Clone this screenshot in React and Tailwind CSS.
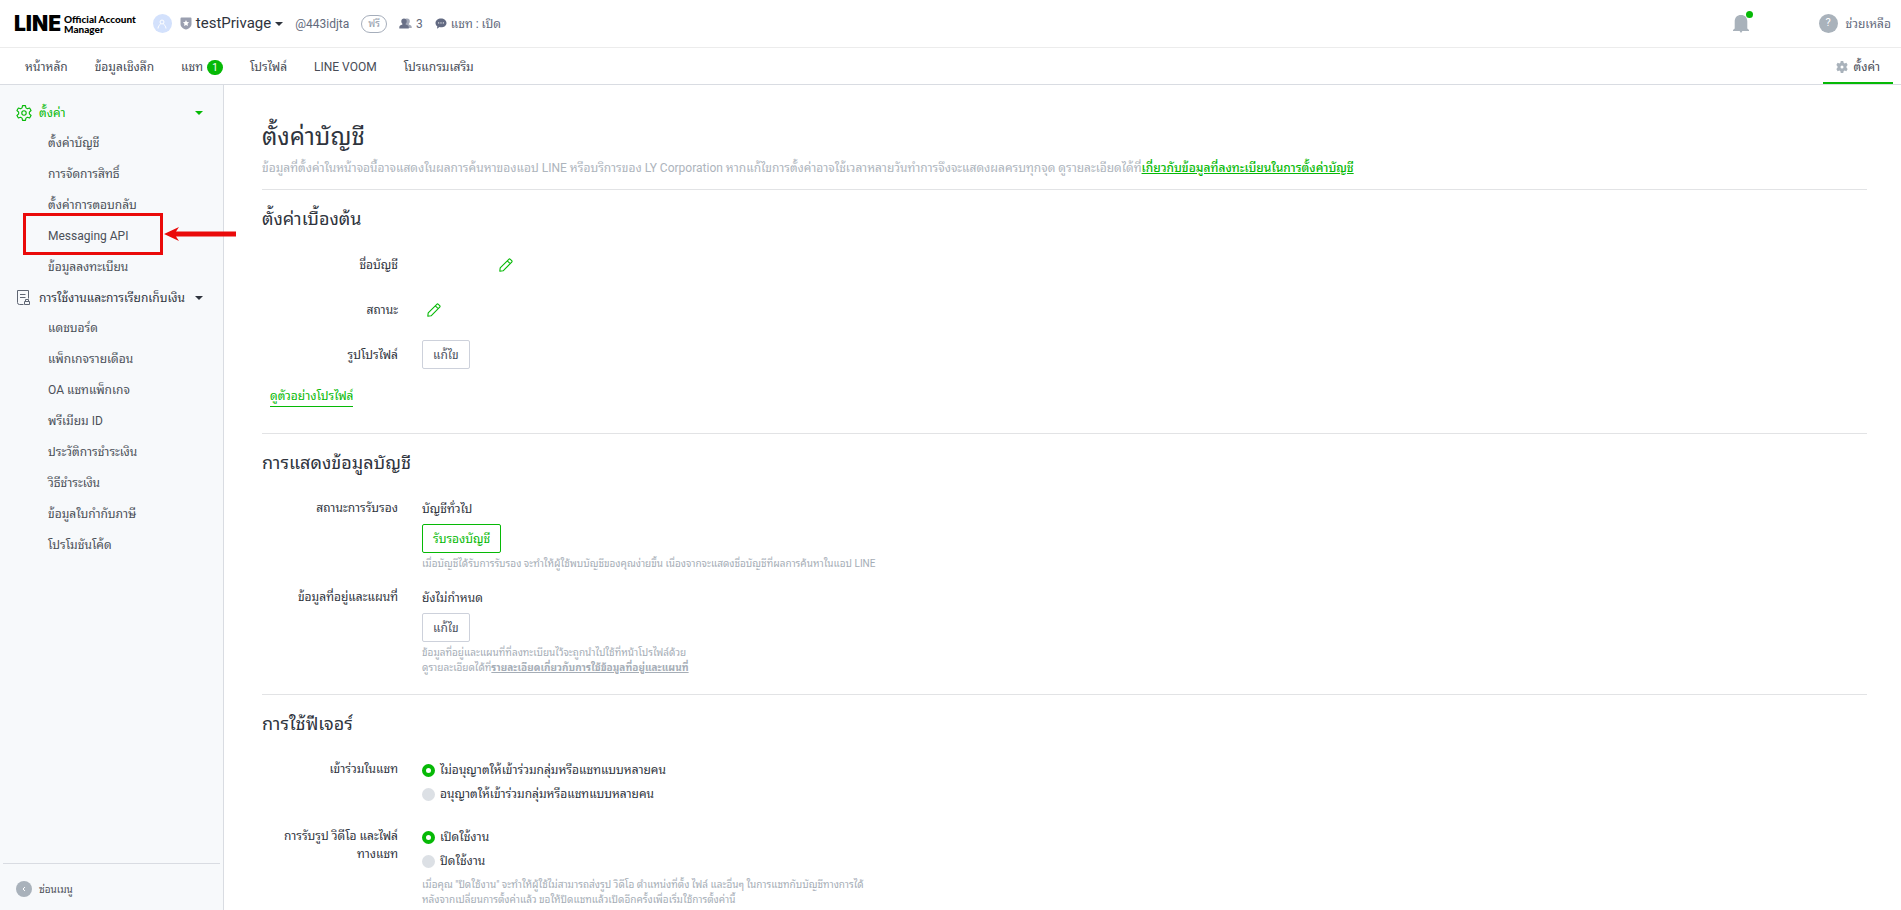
import React, { useState } from 'react';

const mainNav = [
  { label: 'หน้าหลัก' },
  { label: 'ข้อมูลเชิงลึก' },
  { label: 'แชท', badge: 1 },
  { label: 'โปรไฟล์' },
  { label: 'LINE VOOM' },
  { label: 'โปรแกรมเสริม' },
];

const settingsMenu = ['ตั้งค่าบัญชี', 'การจัดการสิทธิ์', 'ตั้งค่าการตอบกลับ', 'Messaging API', 'ข้อมูลลงทะเบียน'];

const billingMenu = [
  'แดชบอร์ด',
  'แพ็กเกจรายเดือน',
  'OA แชทแพ็กเกจ',
  'พรีเมียม ID',
  'ประวัติการชำระเงิน',
  'วิธีชำระเงิน',
  'ข้อมูลใบกำกับภาษี',
  'โปรโมชันโค้ด',
];

// Icons
const Caret = () => (
  <svg viewBox="0 0 8 4" className="h-1 w-2 shrink-0" fill="currentColor" aria-hidden="true">
    <path d="M0 0h8L4 4z" />
  </svg>
);

const Shield = () => (
  <svg viewBox="0 0 12 13" className="h-[13px] w-3 shrink-0" aria-hidden="true">
    <path d="M1.500 .5h9a1 1 0 011 1V7c0 3-2.600 4.700-5.500 5.600C3.100 11.700 .5 10 .5 7V1.500a1 1 0 011-1z" fill="#9a9fb0" />
    <path d="M6 3l.95 1.950 2.150.3-1.550 1.500.37 2.150L6 7.900 4.080 8.900l.37-2.150L2.900 5.250l2.150-.3z" fill="#fff" />
  </svg>
);

const Users = () => (
  <svg viewBox="0 0 13 11" className="h-[11px] w-[13px] shrink-0" aria-hidden="true">
    <path d="M8.300 .5c1.600 0 2.500 1.100 2.500 2.700 0 1-.4 2-1 2.600v.7c1.900.5 2.900 1.200 2.900 2.500v1H6V.9C6.600.6 7.400.5 8.300.5z" fill="#a3a9b8" />
    <path d="M5 .5c1.600 0 2.700 1.100 2.700 2.700 0 1-.4 2-1.100 2.600v.7c2 .5 3.200 1.200 3.200 2.700V10.500H.3V9.200c0-1.500 1.200-2.200 3.100-2.700v-.7c-.7-.6-1.100-1.600-1.100-2.600C2.300 1.600 3.400.5 5 .5z" fill="#697087" />
  </svg>
);

const Chat = () => (
  <svg viewBox="0 0 12 11" className="h-[11px] w-3 shrink-0" aria-hidden="true">
    <path d="M6 .5c3 0 5.500 1.900 5.500 4.400S9 9.300 6 9.300c-.5 0-1-.1-1.500-.2L2 10.800l.3-2.500C1.200 7.500.5 6.300.5 4.900.5 2.400 3 .5 6 .5z" fill="#626a82" />
    <g fill="#fff">
      <circle cx="3.700" cy="4.900" r=".6" />
      <circle cx="6" cy="4.900" r=".6" />
      <circle cx="8.300" cy="4.900" r=".6" />
    </g>
  </svg>
);

const Bell = () => (
  <svg viewBox="0 0 16 18" className="h-[18px] w-4" fill="#a9b2bb" aria-hidden="true">
    <path d="M8 0c4 0 6.300 2.700 6.300 6.500V13.600L16 15v1H0v-1l1.700-1.400V6.500C1.700 2.700 4 0 8 0z" />
    <path d="M6.600 16h2.800L8 18z" />
  </svg>
);

const GearSolid = () => (
  <svg viewBox="0 0 24 24" className="h-3 w-3 shrink-0" aria-hidden="true">
    <path
      fill="#a9b2bb"
      fillRule="evenodd"
      d="M9.500 0h5l.7 3.600 2 1.200 3.600-1.300 2.500 4.300L21 10.300v3.400l2.300 2.500-2.500 4.300-3.600-1.300-2 1.200-.7 3.600h-5l-.7-3.600-2-1.200-3.600 1.300L.7 16.200 3 13.700v-3.400L.7 7.800l2.500-4.300 3.600 1.300 2-1.200zM12 9a3 3 0 100 6 3 3 0 000-6z"
    />
  </svg>
);

const GearOutline = () => (
  <svg viewBox="0 0 24 24" className="h-4 w-4 shrink-0" fill="none" stroke="#06b906" strokeWidth="1.700" strokeLinejoin="round" aria-hidden="true">
    <path d="M9.800 1h4.400l.7 3.300 2.200 1.300 3.300-1.100 2.200 3.800L20 10.700v2.600l2.600 2.400-2.200 3.800-3.300-1.100-2.200 1.300-.7 3.300H9.800l-.7-3.300-2.200-1.300-3.300 1.100-2.200-3.800L4 13.300v-2.600L1.400 8.300l2.200-3.800 3.300 1.100 2.200-1.300z" />
    <circle cx="12" cy="12" r="3.300" />
  </svg>
);

const Invoice = () => (
  <svg viewBox="0 0 16 16" className="h-4 w-4 shrink-0" fill="none" stroke="#5f6673" aria-hidden="true">
    <path d="M7.500 14.500h-4a2 2 0 01-2-2v-12h11v8" />
    <path d="M4 4.500h5.500M4 7.500h5.500" />
    <path d="M8.500 11.500h5v3h-5zM9.500 11.500v-2h3v2" />
  </svg>
);

const Pencil = () => (
  <svg viewBox="0 0 14 14" className="h-3.5 w-3.5" fill="none" stroke="#06b906" strokeWidth="1.100" strokeLinejoin="round" aria-hidden="true">
    <path d="M.8 13.200l.4-3.300L9.800 1.300Q10.500.6 11.300 1.300l1.400 1.400q.7.800 0 1.500L4.100 12.800zM8.300 2.800l2.900 2.900" />
  </svg>
);

const OutlineButton = ({ children, primary }) => (
  <button
    type="button"
    className={`h-[29px] self-start rounded-[2px] border bg-white px-2.5 ${primary ? 'border-[#06b906] text-[#06b906]' : 'border-[#cdd1db] text-[#4c5260]'}`}
  >
    {children}
  </button>
);

const MenuItem = ({ label, highlighted }) => (
  <li className="relative">
    <a href="#" className="block h-[31px] pl-12 leading-[31px] text-[#4b5058] hover:text-[#06b906]">{label}</a>
    {highlighted && (
      <>
        <span className="absolute -top-2 left-[23px] h-[42px] w-[140px] border-[3px] border-[#ea0a0a]" />
        <svg viewBox="0 0 72 14" className="absolute top-1.5 left-[164px] z-10 h-3.5 w-[72px]" fill="#ea0a0a" aria-hidden="true">
          <path d="M0 7L15 0l-3 4.500h60v5H12l3 4.500z" />
        </svg>
      </>
    )}
  </li>
);

const Section = ({ title, children, last }) => (
  <section className={`pt-[17px] ${last ? '' : 'border-b border-[#e2e3e5]'}`}>
    <h2 className="text-[18px] leading-6 text-[#2f343d]">{title}</h2>
    {children}
  </section>
);

const Row = ({ label, children, center }) => (
  <div className={`flex gap-6 ${center ? 'min-h-[31px] items-center' : 'items-start'}`}>
    <div className="w-[136px] shrink-0 text-right leading-[18px]">{label}</div>
    <div className="flex flex-col leading-5">{children}</div>
  </div>
);

const RadioGroup = ({ name, label, options }) => {
  const [value, setValue] = useState(0);
  return (
    <div className="flex flex-col gap-1" role="radiogroup" aria-label={label}>
      {options.map((option, index) => (
        <label key={option} className="flex items-center gap-[5px]">
          <input
            type="radio"
            name={name}
            checked={value === index}
            onChange={() => setValue(index)}
            className="h-[13px] w-[13px] appearance-none rounded-full bg-[#dce0e5] checked:border-4 checked:border-[#06b906] checked:bg-white"
          />
          {option}
        </label>
      ))}
    </div>
  );
};

const Header = () => (
  <header className="text-[12px]">
    <div className="flex h-12 items-center border-b border-[#ececec] pr-2.5 pl-3.5 text-[#636a7c]">
      <a href="#" className="flex items-center gap-[3px] text-black">
        <span className="font-['Inter'] text-[21px] leading-none font-black">LINE</span>
        <span className="font-['Lato'] text-[10px] leading-[10px] font-black">
          Official Account
          <br />
          Manager
        </span>
      </a>
      <span className="ml-[17px] flex h-[19px] w-[19px] items-center justify-center rounded-full bg-[#d3e1fc]">
        <svg viewBox="0 0 10 10" className="h-2.5 w-2.5" fill="none" stroke="#fff" aria-hidden="true">
          <circle cx="5" cy="3" r="2" />
          <path d="M1 9.500C1 7 3 6.200 3.500 4.500M9 9.500C9 7 7 6.200 6.500 4.500" />
        </svg>
      </span>
      <button type="button" className="ml-2 flex items-center gap-1 text-[15px] text-[#2f343d]">
        <Shield />
        testPrivage
        <Caret />
      </button>
      <span className="ml-3">@443idjta</span>
      <span className="ml-3 rounded-full border border-[#a6aebb] px-1.5 text-[10px] leading-4 text-[#949dab]">ฟรี</span>
      <span className="ml-3 flex items-center gap-1"><Users />3</span>
      <span className="ml-3 flex items-center gap-1"><Chat />แชท : เปิด</span>
      <button type="button" aria-label="การแจ้งเตือน" className="relative ml-auto">
        <Bell />
        <span className="absolute -top-1 -right-1 h-[7px] w-[7px] rounded-full bg-[#06b906]" />
      </button>
      <a href="#" className="ml-[70px] flex items-center gap-2">
        <span className="flex h-[19px] w-[19px] items-center justify-center rounded-full bg-[#a9b2bb] text-[11px] text-white">?</span>
        ช่วยเหลือ
      </a>
    </div>
    <nav className="flex h-[37px] items-stretch gap-[27px] border-b border-[#d9dce2] pr-2 pl-[25px] text-[#474c56]">
      {mainNav.map((item) => (
        <a key={item.label} href="#" className="flex items-center gap-1 pt-0.5">
          {item.label}
          {item.badge && (
            <span className="flex h-[15px] w-4 items-center justify-center rounded-full bg-[#06b906] text-[10px] text-white">{item.badge}</span>
          )}
        </a>
      ))}
      <a href="#" className="ml-auto flex items-center gap-1.5 border-y-2 border-t-transparent border-b-[#06b906] px-[13px] pt-0.5">
        <GearSolid />
        ตั้งค่า
      </a>
    </nav>
  </header>
);

const Sidebar = () => (
  <aside className="flex w-56 shrink-0 flex-col border-r border-[#d9dce2] bg-[#f7f9fb] pt-[13px]">
    <button type="button" className="flex items-center gap-[7px] pr-5 pl-4 text-left leading-[30px] text-[#06b906]">
      <GearOutline />
      <span className="flex-1">ตั้งค่า</span>
      <Caret />
    </button>
    <ul>
      {settingsMenu.map((label) => (
        <MenuItem key={label} label={label} highlighted={label === 'Messaging API'} />
      ))}
    </ul>
    <button type="button" className="flex items-center gap-[7px] pr-5 pl-4 text-left leading-[30px] whitespace-nowrap text-[#2f343d]">
      <Invoice />
      <span className="min-w-0 flex-1">การใช้งานและการเรียกเก็บเงิน</span>
      <Caret />
    </button>
    <ul>
      {billingMenu.map((label) => (
        <MenuItem key={label} label={label} />
      ))}
    </ul>
    <button type="button" className="mx-[3px] mt-auto flex h-[47px] items-center gap-[7px] border-t border-[#d9dce2] pt-1 pl-[13px] text-[10px] text-[#4b5058]">
      <span className="flex h-4 w-4 items-center justify-center rounded-full bg-[#a9b2bb]">
        <svg viewBox="0 0 6 6" className="h-1.5 w-1.5" fill="none" stroke="#fff" aria-hidden="true">
          <path d="M4 1L2 3l2 2" />
        </svg>
      </span>
      ซ่อนเมนู
    </button>
  </aside>
);

const App = () => {
  return (
    <div className="flex min-h-screen flex-col bg-white font-['Roboto','Noto_Sans_Thai_Looped','Loma','Waree','Noto_Sans',sans-serif]">
      <Header />
      <div className="flex flex-1 text-[12px] text-[#2f343d]">
        <Sidebar />
        <main className="min-w-0 flex-1 pt-9 pr-[34px] pl-[38px]">
          <div className="border-b border-[#e2e3e5] pb-[11px]">
            <h1 className="text-[24px] leading-8">ตั้งค่าบัญชี</h1>
            <p className="mt-[5px] leading-5 text-[#adb4bc]">
              ข้อมูลที่ตั้งค่าในหน้าจอนี้อาจแสดงในผลการค้นหาของแอป LINE หรือบริการของ LY Corporation หากแก้ไขการตั้งค่าอาจใช้เวลาหลายวันทำการจึงจะแสดงผลครบทุกจุด ดูรายละเอียดได้ที่
              <a href="#" className="font-medium text-[#06b906] underline">เกี่ยวกับข้อมูลที่ลงทะเบียนในการตั้งค่าบัญชี</a>
            </p>
          </div>

          <Section title="ตั้งค่าเบื้องต้น">
            <div className="mt-[18px] flex flex-col gap-3.5">
              <Row label="ชื่อบัญชี" center>
                <button type="button" aria-label="แก้ไขชื่อบัญชี" className="ml-[77px]"><Pencil /></button>
              </Row>
              <Row label="สถานะ" center>
                <button type="button" aria-label="แก้ไขสถานะ" className="ml-[5px]"><Pencil /></button>
              </Row>
              <Row label="รูปโปรไฟล์" center>
                <OutlineButton>แก้ไข</OutlineButton>
              </Row>
            </div>
            <a href="#" className="mt-4 mb-[26px] ml-2 inline-block border-b border-[#06b906] align-top leading-5 text-[#06b906]">ดูตัวอย่างโปรไฟล์</a>
          </Section>

          <Section title="การแสดงข้อมูลบัญชี">
            <div className="mt-6 flex flex-col gap-[17px] pb-[19px]">
              <Row label="สถานะการรับรอง">
                <span className="mb-[5px]">บัญชีทั่วไป</span>
                <OutlineButton primary>รับรองบัญชี</OutlineButton>
                <p className="mt-[3px] text-[10px] leading-[15px] text-[#a5adb6]">
                  เมื่อบัญชีได้รับการรับรอง จะทำให้ผู้ใช้พบบัญชีของคุณง่ายขึ้น เนื่องจากจะแสดงชื่อบัญชีที่ผลการค้นหาในแอป LINE
                </p>
              </Row>
              <Row label="ข้อมูลที่อยู่และแผนที่">
                <span className="mb-[5px]">ยังไม่กำหนด</span>
                <OutlineButton>แก้ไข</OutlineButton>
                <p className="mt-[3px] text-[10px] leading-[15px] text-[#a5adb6]">
                  ข้อมูลที่อยู่และแผนที่ที่ลงทะเบียนไว้จะถูกนำไปใช้ที่หน้าโปรไฟล์ด้วย
                  <br />
                  ดูรายละเอียดได้ที่
                  <a href="#" className="font-bold underline">รายละเอียดเกี่ยวกับการใช้ข้อมูลที่อยู่และแผนที่</a>
                </p>
              </Row>
            </div>
          </Section>

          <Section title="การใช้ฟีเจอร์" last>
            <div className="mt-6 flex flex-col gap-[23px]">
              <Row label="เข้าร่วมในแชท">
                <RadioGroup
                  name="group-chat"
                  label="เข้าร่วมในแชท"
                  options={['ไม่อนุญาตให้เข้าร่วมกลุ่มหรือแชทแบบหลายคน', 'อนุญาตให้เข้าร่วมกลุ่มหรือแชทแบบหลายคน']}
                />
              </Row>
              <Row label={<>การรับรูป วิดีโอ และไฟล์<br />ทางแชท</>}>
                <RadioGroup name="media" label="การรับรูป วิดีโอ และไฟล์ทางแชท" options={['เปิดใช้งาน', 'ปิดใช้งาน']} />
                <p className="mt-1.5 text-[10px] leading-[15px] text-[#a5adb6]">
                  เมื่อคุณ "ปิดใช้งาน" จะทำให้ผู้ใช้ไม่สามารถส่งรูป วิดีโอ ตำแหน่งที่ตั้ง ไฟล์ และอื่นๆ ในการแชทกับบัญชีทางการได้
                  <br />
                  หลังจากเปลี่ยนการตั้งค่าแล้ว ขอให้ปิดแชทแล้วเปิดอีกครั้งเพื่อเริ่มใช้การตั้งค่านี้
                </p>
              </Row>
            </div>
          </Section>
        </main>
      </div>
    </div>
  );
};

export default App;
